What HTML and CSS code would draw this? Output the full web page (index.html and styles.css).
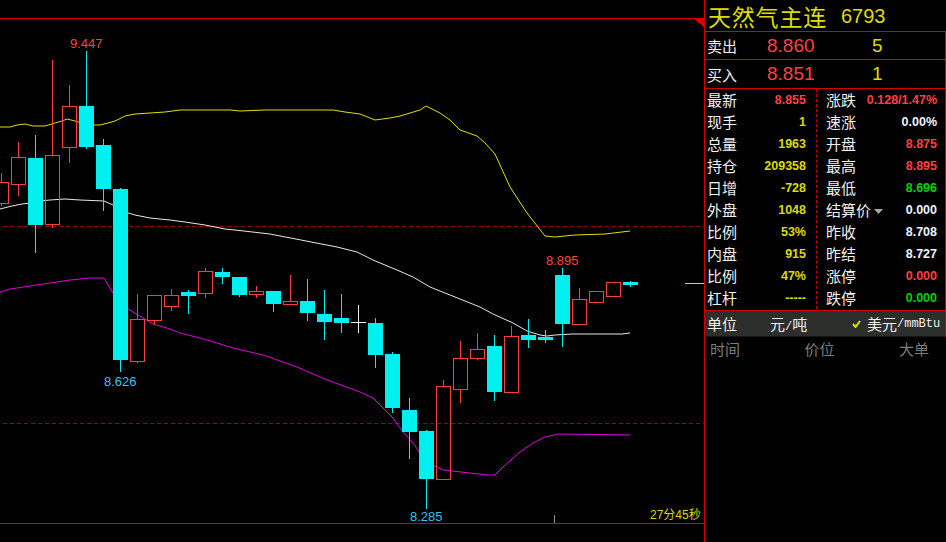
FILE: index.html
```html
<!DOCTYPE html>
<html lang="zh-CN">
<head>
    <meta charset="UTF-8">
    <meta name="viewport" content="width=device-width, initial-scale=1.0">
    <title>天然气主连 6793</title>
    <link rel="stylesheet" href="styles.css">
</head>
<body>

    <!-- K-line chart -->
    <div class="chart">
        <svg id="kline" width="704" height="542" viewBox="0 0 704 542" shape-rendering="crispEdges">
            <line x1="0" y1="18.5" x2="704" y2="18.5" stroke="#d40000"/>
            <line x1="0" y1="523.5" x2="704" y2="523.5" stroke="#d40000"/>
            <line x1="3" y1="226.5" x2="704" y2="226.5" stroke="#a00000" stroke-dasharray="4 3"/>
            <line x1="3" y1="423.5" x2="704" y2="423.5" stroke="#a00000" stroke-dasharray="4 3"/>
            <line x1="554.5" y1="515" x2="554.5" y2="523" stroke="#909090"/>
            <line x1="685" y1="283.5" x2="704" y2="283.5" stroke="#e0e000"/>
            <polygon points="693,18 704,18 704,27" fill="#d40000"/>
            <g id="bands"></g>
            <g id="candles"></g>
            <text class="mark mark-red" x="70" y="48">9.447</text>
            <text class="mark mark-blue" x="104" y="386">8.626</text>
            <text class="mark mark-blue" x="410" y="521">8.285</text>
            <text class="mark mark-red" x="546" y="265">8.895</text>
            <text class="timer" x="650" y="519">27分45秒</text>
        </svg>
    </div>

    <!-- Quote panel -->
    <div class="panel">
        <div class="title"><span class="name">天然气主连</span><span class="code">6793</span></div>

        <div class="quote">
            <span class="q-label">卖出</span>
            <span class="q-price">8.860</span>
            <span class="q-vol">5</span>
        </div>
        <div class="quote quote-last">
            <span class="q-label">买入</span>
            <span class="q-price">8.851</span>
            <span class="q-vol">1</span>
        </div>

        <div class="stats">
            <div class="stats-col stats-left">
                <div class="stat"><span>最新</span><b class="red">8.855</b></div>
                <div class="stat"><span>现手</span><b class="yellow">1</b></div>
                <div class="stat"><span>总量</span><b class="yellow">1963</b></div>
                <div class="stat"><span>持仓</span><b class="yellow">209358</b></div>
                <div class="stat"><span>日增</span><b class="yellow">-728</b></div>
                <div class="stat"><span>外盘</span><b class="yellow">1048</b></div>
                <div class="stat"><span>比例</span><b class="yellow">53%</b></div>
                <div class="stat"><span>内盘</span><b class="yellow">915</b></div>
                <div class="stat"><span>比例</span><b class="yellow">47%</b></div>
                <div class="stat"><span>杠杆</span><b class="yellow">-----</b></div>
            </div>
            <div class="stats-col stats-right">
                <div class="stat"><span>涨跌</span><b class="red">0.128/1.47%</b></div>
                <div class="stat"><span>速涨</span><b class="white">0.00%</b></div>
                <div class="stat"><span>开盘</span><b class="red">8.875</b></div>
                <div class="stat"><span>最高</span><b class="red">8.895</b></div>
                <div class="stat"><span>最低</span><b class="green">8.696</b></div>
                <div class="stat">
                    <span>结算价<svg class="drop" width="9" height="5" viewBox="0 0 9 5"><polygon points="0,0 9,0 4.5,5" fill="#a8a8a8"/></svg></span>
                    <b class="white">0.000</b>
                </div>
                <div class="stat"><span>昨收</span><b class="white">8.708</b></div>
                <div class="stat"><span>昨结</span><b class="white">8.727</b></div>
                <div class="stat"><span>涨停</span><b class="red">0.000</b></div>
                <div class="stat"><span>跌停</span><b class="green">0.000</b></div>
            </div>
        </div>

        <div class="unit">
            <span class="unit-label">单位</span>
            <span class="unit-cny">元<span class="latin">/</span>吨</span>
            <span class="unit-usd">
                <svg class="check" width="9" height="8" viewBox="0 0 9 8"><polyline points="1,4 3.5,7 8,1" fill="none" stroke="#e0e000" stroke-width="2"/></svg>
                美元<span class="latin">/mmBtu</span>
            </span>
        </div>

        <div class="ticks-head">
            <span>时间</span>
            <span>价位</span>
            <span>大单</span>
        </div>
    </div>

    <script>
        // [left x, body top, body bottom, high, low, type]
        const candles = [
            [-6, 182, 203, 173, 206, 'up'],
            [11, 157, 184, 142, 196, 'up'],
            [28, 158, 225, 135, 253, 'down'],
            [45, 155, 224, 60, 228, 'up'],
            [62, 106, 147, 85, 163, 'up'],
            [79, 106, 147, 51, 149, 'down'],
            [96, 145, 189, 139, 211, 'down'],
            [113, 189, 360, 188, 372, 'down'],
            [130, 319, 361, 294, 363, 'up'],
            [147, 295, 320, 295, 325, 'up'],
            [164, 295, 306, 289, 311, 'up'],
            [181, 292, 296, 290, 314, 'down'],
            [198, 271, 293, 268, 298, 'up'],
            [215, 272, 277, 268, 284, 'down'],
            [232, 277, 295, 277, 297, 'down'],
            [249, 291, 294, 286, 298, 'up'],
            [266, 291, 304, 291, 312, 'down'],
            [283, 301, 304, 275, 305, 'up'],
            [300, 301, 313, 279, 321, 'down'],
            [317, 314, 322, 290, 340, 'down'],
            [334, 318, 323, 294, 333, 'down'],
            [351, 322, 322, 305, 333, 'flat'],
            [368, 323, 355, 318, 368, 'down'],
            [385, 354, 408, 352, 413, 'down'],
            [402, 410, 432, 398, 459, 'down'],
            [419, 431, 479, 430, 509, 'down'],
            [436, 386, 479, 380, 480, 'up'],
            [453, 358, 389, 341, 403, 'up'],
            [470, 349, 358, 333, 360, 'up'],
            [487, 346, 392, 335, 401, 'down'],
            [504, 336, 392, 326, 392, 'up'],
            [521, 335, 340, 319, 348, 'down'],
            [538, 337, 340, 330, 343, 'down'],
            [555, 275, 324, 268, 347, 'down'],
            [572, 299, 324, 288, 324, 'up'],
            [589, 291, 302, 291, 303, 'up'],
            [606, 282, 296, 282, 296, 'up'],
            [623, 282, 285, 281, 287, 'down']
        ];

        // Bollinger bands: upper, middle, lower
        const bands = [
            ['#e0e000', '0,127 10,127 17,125 25,124 33,126 45,126 55,123 62,121 67,119 75,121 85,124 93,125 100,125 108,123 115,121 125,116 135,114 150,113 165,112 180,110 230,110 240,111 265,110 333,110 345,112 360,114 375,120 390,118 400,116 420,110 426,106 440,113 450,120 460,130 477,136 485,143 495,154 510,187 527,213 545,236 555,237 575,235 605,234 630,231'],
            ['#e8e8e8', '0,209 12,206 22,204 30,203 40,201 50,200 65,199 80,200 104,201 113,205 125,212 135,215 150,218 170,220 185,222 205,225 225,229 235,230 270,234 301,240 337,247 357,252 373,260 397,270 413,277 430,287 450,295 470,303 480,307 493,314 513,323 527,331 540,335 547,336 555,335 572,334 622,334 630,333'],
            ['#e000e0', '0,292 10,289 30,286 50,283 70,280 90,278 104,278 113,293 120,303 125,307 133,312 143,318 153,324 167,328 180,333 200,338 217,343 233,348 263,355 297,367 327,380 360,392 373,398 380,405 393,418 403,432 413,443 427,463 437,467 443,470 452,471 470,473 487,475 495,475 503,467 520,452 533,443 545,437 558,434 630,435']
        ];

        let bandHtml = '';
        bands.forEach(band => {
            bandHtml += `<polyline points="${band[1]}" fill="none" stroke="${band[0]}" shape-rendering="auto"/>`;
        });
        document.getElementById("bands").innerHTML = bandHtml;

        let candleHtml = '';
        candles.forEach(([x, top, bottom, high, low, type]) => {
            const cx = x + 7.5;
            if (type === 'up') {
                candleHtml += `<line x1="${cx}" y1="${high}" x2="${cx}" y2="${top}" stroke="#ff3c3c"/>`;
                candleHtml += `<line x1="${cx}" y1="${bottom}" x2="${cx}" y2="${low}" stroke="#ff3c3c"/>`;
                candleHtml += `<rect x="${x + 0.5}" y="${top + 0.5}" width="14" height="${bottom - top}" fill="none" stroke="#ff3c3c"/>`;
            } else if (type === 'down') {
                candleHtml += `<line x1="${cx}" y1="${high}" x2="${cx}" y2="${low}" stroke="#00f0f0"/>`;
                candleHtml += `<rect x="${x}" y="${top}" width="15" height="${Math.max(bottom - top, 2)}" fill="#00f0f0"/>`;
            } else {
                candleHtml += `<line x1="${cx}" y1="${high}" x2="${cx}" y2="${low}" stroke="#f0f0f0"/>`;
                candleHtml += `<line x1="${x}" y1="${top + 0.5}" x2="${x + 15}" y2="${top + 0.5}" stroke="#f0f0f0"/>`;
            }
        });
        document.getElementById("candles").innerHTML = candleHtml;
    </script>
</body>
</html>
```

FILE: styles.css
```css
* {
    box-sizing: border-box;
}

body {
    margin: 0;
    width: 946px;
    height: 542px;
    overflow: hidden;
    background: #000;
    display: flex;
    font-family: "Noto Sans CJK SC", sans-serif;
    color: #f0f0f0;
}

.chart {
    width: 704px;
    height: 542px;
    flex-shrink: 0;
}

.chart svg {
    display: block;
}

.mark {
    font-family: "Liberation Sans", Arial, sans-serif;
    font-size: 13px;
}

.mark-red {
    fill: #ff4040;
}

.mark-blue {
    fill: #38c4ee;
}

.timer {
    font-family: "Liberation Sans", "Noto Sans CJK SC", sans-serif;
    font-size: 12px;
    fill: #d8d800;
}

/* right side panel */
.panel {
    width: 242px;
    height: 542px;
    border-left: 1px solid #d40000;
    display: flex;
    flex-direction: column;
}

.title {
    height: 32px;
    border-bottom: 1px solid #d40000;
    padding-left: 3px;
    display: flex;
    align-items: center;
    color: #dcdc00;
}

.name {
    font-size: 23px;
    line-height: 30px;
    letter-spacing: 0.8px;
}

.code {
    margin-left: 14px;
    font-family: "Liberation Sans", Arial, sans-serif;
    font-size: 20px;
    line-height: 30px;
}

.quote {
    height: 28px;
    border-bottom: 1px solid #d40000;
    border-right: 1px solid #d40000;
    display: flex;
    align-items: center;
}

.quote-last {
    height: 29px;
}

.q-label {
    width: 62px;
    padding-left: 2px;
    font-size: 15px;
}

.q-price {
    width: 95px;
    font-family: "Liberation Sans", Arial, sans-serif;
    font-size: 19px;
    color: #ff4040;
}

.q-vol {
    padding-left: 10px;
    font-family: "Liberation Sans", Arial, sans-serif;
    font-size: 19px;
    color: #dcdc00;
}

.stats {
    display: flex;
    border-bottom: 1px solid #d40000;
    border-right: 1px solid #d40000;
    padding-bottom: 1px;
}

.stats-col {
    display: flex;
    flex-direction: column;
}

.stats-left {
    width: 112px;
    padding: 0 10px 0 2px;
    border-right: 1px dashed #c00000;
}

.stats-right {
    flex: 1;
    padding: 0 8px 0 9px;
}

.stat {
    height: 22px;
    display: flex;
    align-items: center;
    justify-content: space-between;
    font-size: 15px;
    line-height: 20px;
}

.stat span {
    display: flex;
    align-items: center;
}

.stat b {
    font-family: "Liberation Sans", Arial, sans-serif;
    font-size: 12.5px;
}

.drop {
    margin-left: 3px;
    margin-top: 3px;
}

.red {
    color: #ff4040;
}

.yellow {
    color: #dcdc00;
}

.white {
    color: #eef4ff;
}

.green {
    color: #00d400;
}

.unit {
    height: 26px;
    background: #2c2e2c;
    border-right: 1px solid #d40000;
    border-bottom: 1px solid #161616;
    display: flex;
    align-items: center;
    font-size: 15px;
}

.unit-label {
    width: 65px;
    padding-left: 2px;
}

.unit-cny {
    width: 82px;
}

.unit-usd {
    display: flex;
    align-items: center;
}

.check {
    margin-right: 6px;
}

.latin {
    font-family: "Liberation Mono", monospace;
    font-size: 12px;
}

.ticks-head {
    height: 22px;
    display: flex;
    align-items: center;
    justify-content: space-between;
    padding: 0 17px 0 5px;
    font-size: 15px;
    color: #7c7c7c;
}
```
